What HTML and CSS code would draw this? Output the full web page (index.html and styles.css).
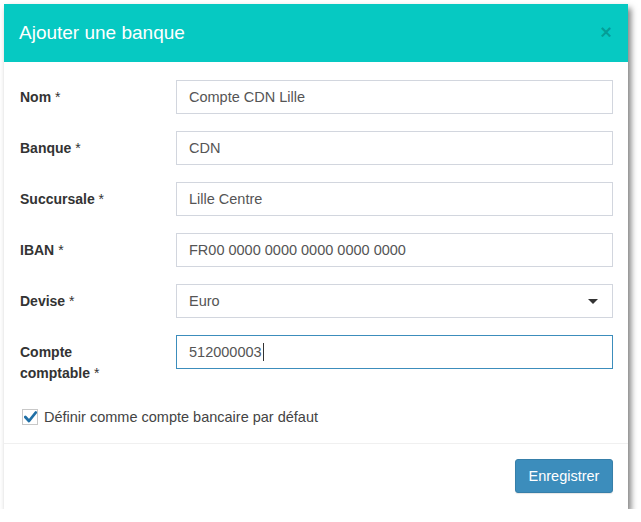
FILE: index.html
```html
<!DOCTYPE html>
<html lang="fr">
<head>
<meta charset="utf-8">
<title>Ajouter une banque</title>
<link rel="stylesheet" href="styles.css">
</head>
<body>
<div class="modal">
  <div class="modal-header">
    <h4 class="modal-title">Ajouter une banque</h4>
    <span class="close">×</span>
  </div>
  <div class="modal-body">
    <div class="row">
      <label class="lbl">Nom <span class="req">*</span></label>
      <div class="control">Compte CDN Lille</div>
    </div>
    <div class="row">
      <label class="lbl">Banque <span class="req">*</span></label>
      <div class="control">CDN</div>
    </div>
    <div class="row">
      <label class="lbl">Succursale <span class="req">*</span></label>
      <div class="control">Lille Centre</div>
    </div>
    <div class="row">
      <label class="lbl">IBAN <span class="req">*</span></label>
      <div class="control">FR00 0000 0000 0000 0000 0000</div>
    </div>
    <div class="row">
      <label class="lbl">Devise <span class="req">*</span></label>
      <div class="control select">Euro<span class="caret"></span></div>
    </div>
    <div class="row">
      <label class="lbl">Compte<br>comptable <span class="req">*</span></label>
      <div class="control focus">512000003<span class="cursor"></span></div>
    </div>
    <div class="check-row">
      <span class="checkbox">
        <svg width="13" height="12" viewBox="0 0 13 12"><path d="M1.3 6 L5 10 L11.8 1.5" fill="none" stroke="#1f6fa6" stroke-width="2.8" stroke-linecap="round" stroke-linejoin="round"/></svg>
      </span>
      <span class="check-label">Définir comme compte bancaire par défaut</span>
    </div>
  </div>
  <div class="modal-footer">
    <button class="btn">Enregistrer</button>
  </div>
</div>
</body>
</html>
```

FILE: styles.css
```css
* { box-sizing: border-box; }
html, body { margin: 0; padding: 0; background: #fff; }
body {
  font-family: "Liberation Sans", Arial, sans-serif;
  color: #333;
  padding: 4px 0 0 4px;
}
.modal {
  width: 624px;
  height: 505px;
  background: #fff;
  box-shadow: 3px 4px 6px rgba(0,0,0,0.5);
  display: flex;
  flex-direction: column;
}
.modal-header {
  background: #06c9c2;
  height: 58px;
  display: flex;
  align-items: center;
  justify-content: space-between;
  padding: 0 16px 0 15px;
}
.modal-title {
  margin: 0;
  color: #fff;
  font-weight: normal;
  font-size: 19px;
  line-height: 22px;
}
.close {
  color: rgba(0,0,0,0.22);
  font-size: 20px;
  font-weight: bold;
  line-height: 20px;
  margin-top: -2px;
}
.modal-body {
  padding: 18px 15px 0 16px;
  flex: 1;
}
.row {
  display: flex;
  align-items: flex-start;
  margin-bottom: 17px;
}
.lbl {
  width: 156px;
  flex: none;
  font-weight: bold;
  font-size: 14px;
  line-height: 21px;
  padding-top: 7px;
  color: #333;
}
.req { font-weight: normal; }
.control {
  flex: 1;
  height: 34px;
  border: 1px solid #d2d6de;
  padding: 0 12px;
  font-size: 14.5px;
  color: #555;
  display: flex;
  align-items: center;
}
.select { position: relative; }
.caret {
  position: absolute;
  right: 14px;
  top: 14px;
  width: 0;
  height: 0;
  border-left: 5px solid transparent;
  border-right: 5px solid transparent;
  border-top: 5px solid #333;
}
.focus { border-color: #3c8dbc; }
.cursor {
  display: inline-block;
  width: 1px;
  height: 18px;
  background: #333;
  margin-left: 1px;
}
.check-row {
  display: flex;
  align-items: center;
  margin-top: 25px;
  padding-left: 2px;
}
.checkbox {
  width: 16px;
  height: 16px;
  border: 1px solid #c8c8c8;
  background: #fff;
  display: flex;
  align-items: center;
  justify-content: center;
  margin-right: 6px;
}
.check-label {
  font-size: 14.5px;
  color: #444;
}
.modal-footer {
  border-top: 1px solid #f0f0f0;
  padding: 15px 15px 16px;
  display: flex;
  justify-content: flex-end;
}
.btn {
  font-family: "Liberation Sans", Arial, sans-serif;
  font-size: 14.5px;
  color: #fff;
  background: #3c8dbc;
  border: 1px solid #367fa9;
  border-radius: 3px;
  height: 34px;
  width: 98px;
  padding: 0;
  box-shadow: 0 1px 1px rgba(0,0,0,0.1);
}
```
